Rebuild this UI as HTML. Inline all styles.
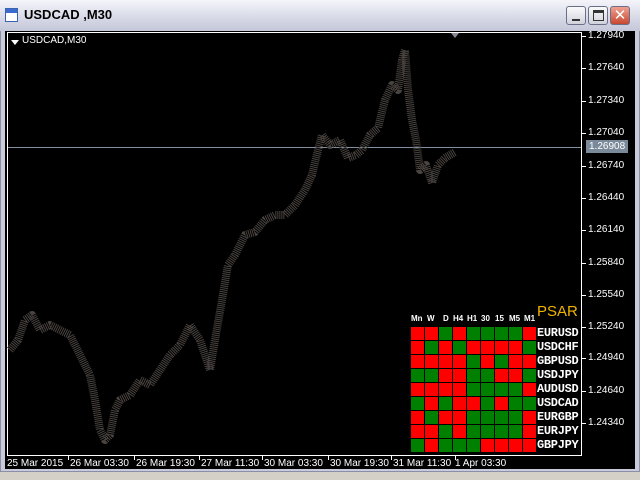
<!DOCTYPE html>
<html><head><style>
*{margin:0;padding:0;box-sizing:border-box}
body{width:640px;height:480px;overflow:hidden;background:#d4d0c8;font-family:"Liberation Sans",sans-serif;position:relative}
.frame{position:absolute;left:0;top:0;width:640px;height:472px;background:#c9cbd8;border:1px solid #8a8ea8}
.title{position:absolute;left:0;top:0;width:640px;height:31px;background:linear-gradient(#f4f5fa,#d6d8e6 60%,#c4c7d8)}
.ttext{position:absolute;left:24px;top:7px;font-size:13px;font-weight:bold;color:#000}
.btn{position:absolute;top:6px;width:20px;height:19px;border:1px solid #6a6e88;border-radius:3px;background:linear-gradient(#fafafa,#d0d2dc)}
.chart{position:absolute;left:5px;top:31px;width:630px;height:438px;background:#000}
.t{position:absolute;color:#fff;font-size:10px;white-space:nowrap}
.p{position:absolute;left:588px;color:#fff;font-size:10px}
.grid{position:absolute;left:411px;top:327px}
.c{position:absolute;width:13px;height:13px}
.R{background:#f00}.G{background:#008000}
.sym{position:absolute;left:537px;color:#fff;font-size:12px;font-weight:bold;font-family:"Liberation Mono",monospace;letter-spacing:-0.3px}
.hd{position:absolute;top:314px;color:#fff;font-size:8px;font-weight:bold}
</style></head><body>
<div class="frame"></div>
<div class="title"></div>
<div style="position:absolute;left:5px;top:8px;width:13px;height:14px;border:1px solid #3a64b0;background:#fff"><div style="height:4px;background:#3a6cd0"></div></div>
<div class="ttext">USDCAD ,M30</div>
<div class="btn" style="left:566px"><div style="position:absolute;left:5px;top:12px;width:8px;height:2px;background:#333"></div></div>
<div class="btn" style="left:588px"><div style="position:absolute;left:4px;top:3px;width:11px;height:11px;border:1px solid #333;border-top-width:3px"></div></div>
<div class="btn" style="left:610px;background:linear-gradient(#f0a090,#c84830);color:#fff;font-size:15px;text-align:center;line-height:17px">✕</div>
<div class="chart"></div>
<svg style="position:absolute;left:0;top:0" width="640" height="480">
<rect x="7.5" y="32.5" width="574" height="423" fill="none" stroke="#fff"/>
<polygon points="451,33 459,33 455,38" fill="#889"/>
<line x1="8" y1="147.5" x2="581" y2="147.5" stroke="#8090a0"/>
<polyline points="10,350 18,340 25,320 32,315 40,330 50,325 60,330 70,335 80,355 90,375 95,400 100,430 105,440 110,435 115,410 120,400 130,395 140,380 150,385 160,370 170,355 180,345 190,325 200,340 210,370 215,340 222,300 228,265 235,255 245,235 255,232 265,220 275,215 285,215 295,205 305,190 312,175 318,150 322,135 330,145 340,140 348,158 356,155 362,150 370,135 378,128 385,100 392,85 398,90 402,60 405,50 408,90 412,120 416,140 420,170 426,165 432,183 438,165 445,158 455,152" fill="none" stroke="#4a4440" stroke-width="8" stroke-linejoin="round" stroke-dasharray="1 1"/>
<g stroke="#fff">
<line x1="582" y1="36.5" x2="586" y2="36.5"/><line x1="582" y1="68.5" x2="586" y2="68.5"/><line x1="582" y1="101.5" x2="586" y2="101.5"/><line x1="582" y1="133.5" x2="586" y2="133.5"/><line x1="582" y1="166.5" x2="586" y2="166.5"/><line x1="582" y1="198.5" x2="586" y2="198.5"/><line x1="582" y1="230.5" x2="586" y2="230.5"/><line x1="582" y1="263.5" x2="586" y2="263.5"/><line x1="582" y1="295.5" x2="586" y2="295.5"/><line x1="582" y1="327.5" x2="586" y2="327.5"/><line x1="582" y1="358.5" x2="586" y2="358.5"/><line x1="582" y1="391.5" x2="586" y2="391.5"/><line x1="582" y1="423.5" x2="586" y2="423.5"/>
<line x1="68.5" y1="456" x2="68.5" y2="460"/><line x1="134.5" y1="456" x2="134.5" y2="460"/><line x1="199.5" y1="456" x2="199.5" y2="460"/><line x1="262.5" y1="456" x2="262.5" y2="460"/><line x1="328.5" y1="456" x2="328.5" y2="460"/><line x1="391.5" y1="456" x2="391.5" y2="460"/><line x1="455.5" y1="456" x2="455.5" y2="460"/>
</g>
<polygon points="11,40 19,40 15,45" fill="#fff"/>
</svg>
<div class="t" style="left:22px;top:35px">USDCAD,M30</div>
<div class="p" style="top:30px">1.27940</div>
<div class="p" style="top:62px">1.27640</div>
<div class="p" style="top:95px">1.27340</div>
<div class="p" style="top:127px">1.27040</div>
<div class="p" style="top:140px;left:586px;background:#7a8a9a;padding:0 3px;height:13px;line-height:13px">1.26908</div>
<div class="p" style="top:160px">1.26740</div>
<div class="p" style="top:192px">1.26440</div>
<div class="p" style="top:224px">1.26140</div>
<div class="p" style="top:257px">1.25840</div>
<div class="p" style="top:289px">1.25540</div>
<div class="p" style="top:321px">1.25240</div>
<div class="p" style="top:352px">1.24940</div>
<div class="p" style="top:385px">1.24640</div>
<div class="p" style="top:417px">1.24340</div>
<div class="t" style="left:7px;top:458px">25 Mar 2015</div>
<div class="t" style="left:70px;top:458px">26 Mar 03:30</div>
<div class="t" style="left:136px;top:458px">26 Mar 19:30</div>
<div class="t" style="left:201px;top:458px">27 Mar 11:30</div>
<div class="t" style="left:264px;top:458px">30 Mar 03:30</div>
<div class="t" style="left:330px;top:458px">30 Mar 19:30</div>
<div class="t" style="left:393px;top:458px">31 Mar 11:30</div>
<div class="t" style="left:455px;top:458px">1 Apr 03:30</div>
<div style="position:absolute;left:537px;top:303px;color:#f0b400;font-size:15px">PSAR</div>
<div class="hd" style="left:411px">Mn</div><div class="hd" style="left:427px">W</div><div class="hd" style="left:443px">D</div><div class="hd" style="left:453px">H4</div><div class="hd" style="left:467px">H1</div><div class="hd" style="left:481px">30</div><div class="hd" style="left:495px">15</div><div class="hd" style="left:509px">M5</div><div class="hd" style="left:524px">M1</div>
<div class="sym" style="top:326px">EURUSD</div>
<div class="sym" style="top:340px">USDCHF</div>
<div class="sym" style="top:354px">GBPUSD</div>
<div class="sym" style="top:368px">USDJPY</div>
<div class="sym" style="top:382px">AUDUSD</div>
<div class="sym" style="top:396px">USDCAD</div>
<div class="sym" style="top:410px">EURGBP</div>
<div class="sym" style="top:424px">EURJPY</div>
<div class="sym" style="top:438px">GBPJPY</div>
<div class="grid">
<div class="c R" style="left:0;top:0"></div><div class="c R" style="left:14px;top:0"></div><div class="c G" style="left:28px;top:0"></div><div class="c R" style="left:42px;top:0"></div><div class="c G" style="left:56px;top:0"></div><div class="c G" style="left:70px;top:0"></div><div class="c G" style="left:84px;top:0"></div><div class="c G" style="left:98px;top:0"></div><div class="c R" style="left:112px;top:0"></div>
<div class="c R" style="left:0;top:14px"></div><div class="c G" style="left:14px;top:14px"></div><div class="c R" style="left:28px;top:14px"></div><div class="c G" style="left:42px;top:14px"></div><div class="c R" style="left:56px;top:14px"></div><div class="c R" style="left:70px;top:14px"></div><div class="c R" style="left:84px;top:14px"></div><div class="c R" style="left:98px;top:14px"></div><div class="c G" style="left:112px;top:14px"></div>
<div class="c R" style="left:0;top:28px"></div><div class="c R" style="left:14px;top:28px"></div><div class="c R" style="left:28px;top:28px"></div><div class="c R" style="left:42px;top:28px"></div><div class="c G" style="left:56px;top:28px"></div><div class="c R" style="left:70px;top:28px"></div><div class="c G" style="left:84px;top:28px"></div><div class="c R" style="left:98px;top:28px"></div><div class="c R" style="left:112px;top:28px"></div>
<div class="c G" style="left:0;top:42px"></div><div class="c G" style="left:14px;top:42px"></div><div class="c R" style="left:28px;top:42px"></div><div class="c R" style="left:42px;top:42px"></div><div class="c G" style="left:56px;top:42px"></div><div class="c G" style="left:70px;top:42px"></div><div class="c R" style="left:84px;top:42px"></div><div class="c R" style="left:98px;top:42px"></div><div class="c G" style="left:112px;top:42px"></div>
<div class="c R" style="left:0;top:56px"></div><div class="c R" style="left:14px;top:56px"></div><div class="c R" style="left:28px;top:56px"></div><div class="c R" style="left:42px;top:56px"></div><div class="c G" style="left:56px;top:56px"></div><div class="c G" style="left:70px;top:56px"></div><div class="c G" style="left:84px;top:56px"></div><div class="c G" style="left:98px;top:56px"></div><div class="c R" style="left:112px;top:56px"></div>
<div class="c G" style="left:0;top:70px"></div><div class="c R" style="left:14px;top:70px"></div><div class="c G" style="left:28px;top:70px"></div><div class="c R" style="left:42px;top:70px"></div><div class="c R" style="left:56px;top:70px"></div><div class="c G" style="left:70px;top:70px"></div><div class="c R" style="left:84px;top:70px"></div><div class="c G" style="left:98px;top:70px"></div><div class="c G" style="left:112px;top:70px"></div>
<div class="c R" style="left:0;top:84px"></div><div class="c G" style="left:14px;top:84px"></div><div class="c R" style="left:28px;top:84px"></div><div class="c R" style="left:42px;top:84px"></div><div class="c G" style="left:56px;top:84px"></div><div class="c G" style="left:70px;top:84px"></div><div class="c G" style="left:84px;top:84px"></div><div class="c G" style="left:98px;top:84px"></div><div class="c R" style="left:112px;top:84px"></div>
<div class="c R" style="left:0;top:98px"></div><div class="c R" style="left:14px;top:98px"></div><div class="c G" style="left:28px;top:98px"></div><div class="c R" style="left:42px;top:98px"></div><div class="c G" style="left:56px;top:98px"></div><div class="c G" style="left:70px;top:98px"></div><div class="c G" style="left:84px;top:98px"></div><div class="c G" style="left:98px;top:98px"></div><div class="c R" style="left:112px;top:98px"></div>
<div class="c G" style="left:0;top:112px"></div><div class="c R" style="left:14px;top:112px"></div><div class="c G" style="left:28px;top:112px"></div><div class="c G" style="left:42px;top:112px"></div><div class="c G" style="left:56px;top:112px"></div><div class="c R" style="left:70px;top:112px"></div><div class="c R" style="left:84px;top:112px"></div><div class="c R" style="left:98px;top:112px"></div><div class="c R" style="left:112px;top:112px"></div>
</div>
</body></html>
